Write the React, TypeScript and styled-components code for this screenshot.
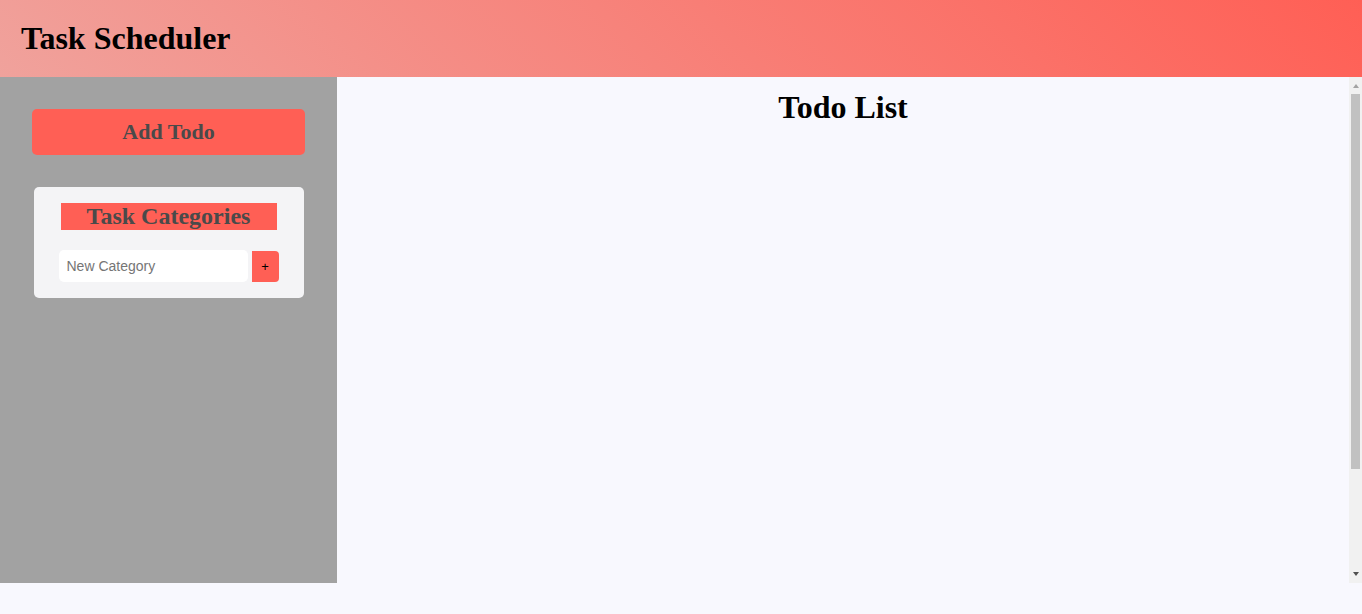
import React from "react";
import styled, { createGlobalStyle } from "styled-components";

const GlobalStyle = createGlobalStyle`
  html, body {
    margin: 0;
    padding: 0;
    background: #f8f8fe;
    font-family: "Liberation Serif", "Times New Roman", serif;
  }
  * { box-sizing: border-box; }
`;

const Header = styled.header`
  height: 77px;
  padding: 20px 20px 20px 21px;
  background: linear-gradient(45deg, #f0a29c, #ff5f55);
`;

const Title = styled.h1`
  margin: 0;
  font-size: 32px;
  font-weight: bold;
  color: #000;
`;

const Body = styled.div`
  display: flex;
  height: 506px;
`;

const Sidebar = styled.aside`
  width: 337px;
  flex-shrink: 0;
  background: #a2a2a2;
  padding: 32px 32px 0;
  display: flex;
  flex-direction: column;
  align-items: center;
`;

const AddButton = styled.button`
  width: 273px;
  height: 46px;
  border: none;
  border-radius: 5px;
  background: #ff5f55;
  color: #4a4a4a;
  font-family: "Liberation Serif", "Times New Roman", serif;
  font-weight: bold;
  font-size: 22px;
  cursor: pointer;
`;

const Card = styled.section`
  margin-top: 32px;
  width: 270px;
  background: #f4f4f6;
  border-radius: 5px;
  padding: 16px 0 16px;
  display: flex;
  flex-direction: column;
  align-items: center;
`;

const CardTitle = styled.h2`
  margin: 0;
  width: 216px;
  background: #ff5f55;
  color: #4a4a4a;
  font-size: 24px;
  font-weight: bold;
  text-align: center;
  line-height: 27px;
`;

const Row = styled.div`
  margin-top: 20px;
  display: flex;
  align-items: flex-start;
  gap: 4px;
`;

const Input = styled.input`
  width: 189px;
  height: 32px;
  border: none;
  border-radius: 5px;
  background: #fff;
  padding: 0 8px;
  font-family: "Liberation Sans", Arial, sans-serif;
  font-size: 14px;
  color: #333;
  outline: none;
  &::placeholder { color: #757575; }
`;

const PlusButton = styled.button`
  margin-top: 1px;
  width: 27px;
  height: 31px;
  border: none;
  border-radius: 0 4px 4px 0;
  background: #ff5f55;
  color: #000;
  font-family: "Liberation Sans", Arial, sans-serif;
  font-size: 13px;
  padding: 0;
  cursor: pointer;
`;

const Main = styled.main`
  flex: 1;
  display: flex;
  background: #f8f8fe;
`;

const Content = styled.div`
  flex: 1;
  padding-top: 12px;
`;

const MainTitle = styled.h1`
  margin: 0;
  text-align: center;
  font-size: 32px;
  font-weight: bold;
  color: #000;
`;

const ScrollTrack = styled.div`
  width: 13px;
  flex-shrink: 0;
  background: #f1f1f1;
  display: flex;
  flex-direction: column;
`;

const ScrollButton = styled.div`
  height: 17px;
  flex-shrink: 0;
  display: flex;
  align-items: center;
  justify-content: center;
  padding-left: 1px;
`;

const Arrow = styled.span<{ $down?: boolean; $color: string }>`
  width: 0;
  height: 0;
  border-left: 3.5px solid transparent;
  border-right: 3.5px solid transparent;
  ${(p) =>
    p.$down
      ? `border-top: 4px solid ${p.$color}; margin-bottom: 1px;`
      : `border-bottom: 4px solid ${p.$color}; margin-top: 1px;`}
`;

const ThumbArea = styled.div`
  flex: 1;
  display: flex;
  flex-direction: column;
`;

const Thumb = styled.div`
  height: 375px;
  margin: 0 2px;
  background: #c1c1c1;
`;

export default function App() {
  return (
    <>
      <GlobalStyle />
      <Header>
        <Title>Task Scheduler</Title>
      </Header>
      <Body>
        <Sidebar>
          <AddButton>Add Todo</AddButton>
          <Card>
            <CardTitle>Task Categories</CardTitle>
            <Row>
              <Input placeholder="New Category" />
              <PlusButton>+</PlusButton>
            </Row>
          </Card>
        </Sidebar>
        <Main>
          <Content>
            <MainTitle>Todo List</MainTitle>
          </Content>
          <ScrollTrack>
            <ScrollButton>
              <Arrow $color="#a3a3a3" />
            </ScrollButton>
            <ThumbArea>
              <Thumb />
            </ThumbArea>
            <ScrollButton>
              <Arrow $down $color="#505050" />
            </ScrollButton>
          </ScrollTrack>
        </Main>
      </Body>
    </>
  );
}
